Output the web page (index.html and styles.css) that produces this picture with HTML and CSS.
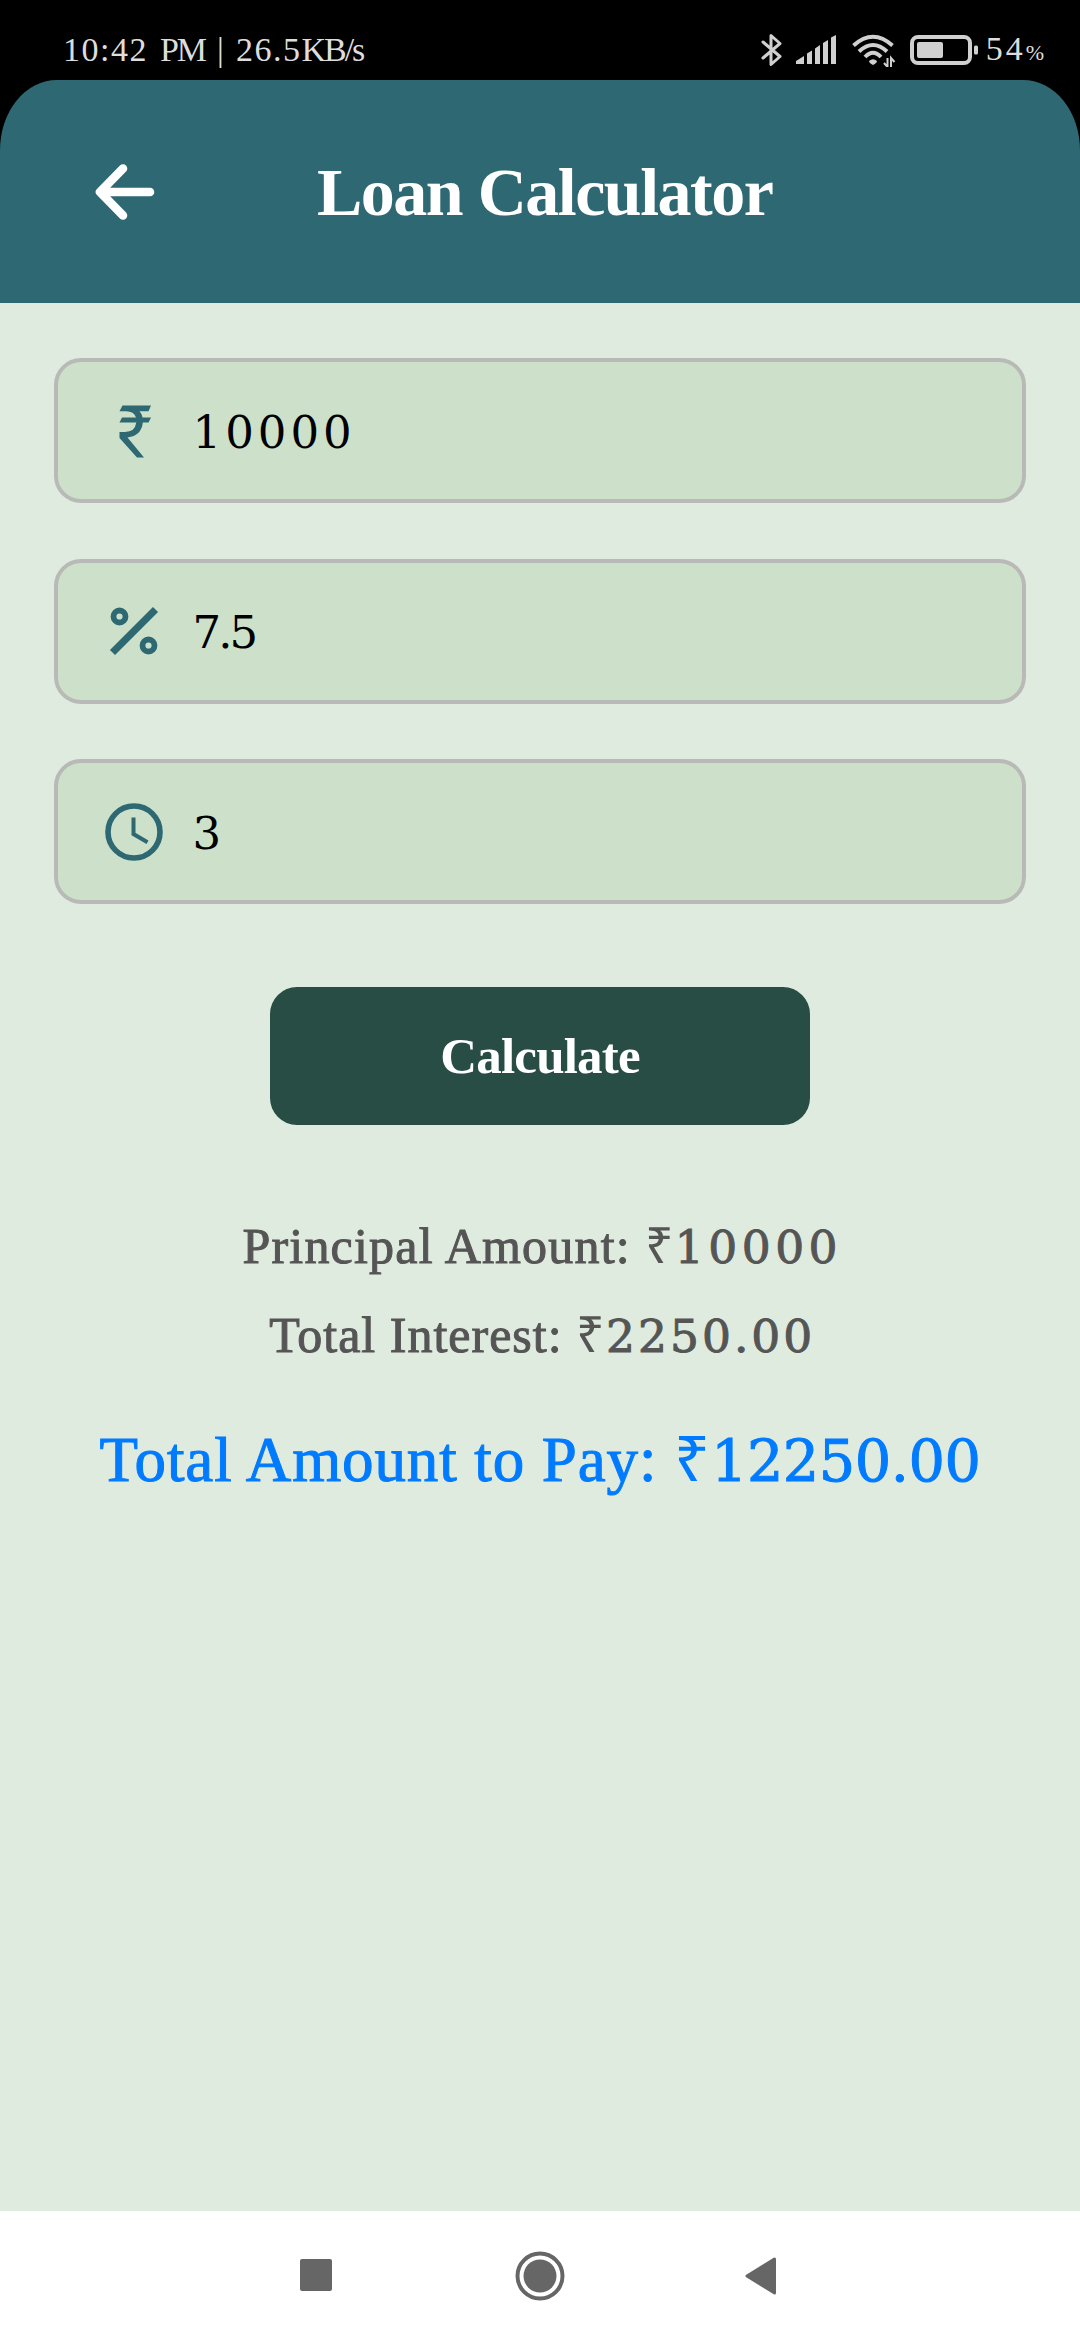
FILE: index.html
```html
<!DOCTYPE html>
<html lang="en">
<head>
<meta charset="utf-8">
<title>Loan Calculator</title>
<link rel="stylesheet" href="styles.css">
</head>
<body>
<div class="status">
  <div class="clock"><span class="digits">10:42</span> <span class="caps">PM</span> | <span class="digits">26.5</span><span class="caps">KB/s</span></div>
  <div class="indicators">
    <svg class="bt" width="22" height="34" viewBox="0 0 22 34"><path d="M2 9 19 23.500 10 31.500V2.500L19 10.500 2 25" fill="none" stroke="#d0d0d0" stroke-width="3" stroke-linecap="round" stroke-linejoin="round"/></svg>
    <svg class="signal" width="40" height="34" viewBox="0 0 40 34"><path d="M0 31V28L8 23V31ZM11 31V20.500L16 17.500V31ZM19 31V15.500L24 12V31ZM27 31V10L32 7V31ZM35 31V4.500L40 2V31Z" fill="#d0d0d0"/></svg>
    <svg class="wifi" width="44" height="34" viewBox="0 0 44 34"><g fill="none" stroke="#d0d0d0" stroke-width="4"><path d="M1.500 12.500Q21 -5 40.500 12.500"/><path d="M7 18.500Q21 5.500 35 18.500"/><path d="M13 24Q21 15.500 29 24"/></g><path d="M17 28Q21 24.500 25 28 25 30 21 32 17 30 17 28Z" fill="#d0d0d0"/><path d="M35.500 25V34L32 30M39 34V25L42.500 29" fill="none" stroke="#d0d0d0" stroke-width="2"/></svg>
    <svg class="battery" width="68" height="34" viewBox="0 0 68 34"><rect x="2" y="4" width="58" height="26" rx="6" fill="none" stroke="#d0d0d0" stroke-width="4"/><rect x="7" y="9" width="26" height="16" rx="2" fill="#d0d0d0"/><rect x="64" y="12.500" width="4" height="9" rx="1.500" fill="#d0d0d0"/></svg>
    <div class="level"><span class="digits">54</span><span class="pct">%</span></div>
  </div>
</div>
<header class="header">
  <svg class="back" width="60" height="56" viewBox="0 0 60 56"><path d="M28 4.500 5 28 28 51.500M5 28H55" fill="none" stroke="#fff" stroke-width="8.600" stroke-linecap="round" stroke-linejoin="round"/></svg>
  <h1 class="title">Loan Calculator</h1>
</header>
<main class="main">
  <div class="fields">
    <div class="field">
      <svg width="58" height="58" viewBox="0 0 58 58" fill="#2d6873"><path d="M17.500 3.500H46L43.500 9.300H34.500Q37 12 37.600 15.500H46L43.500 20.600H37.800Q36.500 34 22.500 35.500L39 55.500H32L14.500 36V30H20Q30 30 31.300 20.600H14.500L17 15.500H31Q29 9.300 21 9.300H14.500Z"/></svg>
      <span class="value wide">10000</span>
    </div>
    <div class="field">
      <svg width="58" height="58" viewBox="0 0 58 58" fill="none" stroke="#2d6873"><path d="M7.500 50.500 50.500 7.500" stroke-width="7.200"/><circle cx="14.500" cy="14.500" r="6" stroke-width="5.800"/><circle cx="43.500" cy="43.500" r="6" stroke-width="5.800"/></svg>
      <span class="value">7.5</span>
    </div>
    <div class="field">
      <svg width="58" height="58" viewBox="0 0 58 58" fill="none" stroke="#2d6873"><circle cx="29" cy="29" r="26" stroke-width="5.600"/><path d="M28.500 14.500V31L42.500 39.300" stroke-width="4"/></svg>
      <span class="value">3</span>
    </div>
  </div>
  <button class="calculate">Calculate</button>
  <section class="results">
    <p class="line">Principal Amount: <span class="rupee">₹</span><span class="sum">10000</span></p>
    <p class="line interest">Total Interest: <span class="rupee">₹</span><span class="sum">2250.00</span></p>
    <p class="line total">Total Amount to Pay: <span class="rupee">₹</span><span class="sum">12250.00</span></p>
  </section>
</main>
<nav class="nav">
  <svg width="32" height="50" viewBox="0 0 32 50"><rect y="8" width="32" height="32" rx="2" fill="#666"/></svg>
  <svg width="50" height="50" viewBox="0 0 50 50"><circle cx="25" cy="25" r="22.500" fill="none" stroke="#666" stroke-width="4"/><circle cx="25" cy="25" r="16.500" fill="#666"/></svg>
  <svg class="nav-back" width="32" height="50" viewBox="0 0 32 50"><path d="M2 25 29.500 8V42Z" fill="#666" stroke="#666" stroke-width="3" stroke-linejoin="round"/></svg>
</nav>
</body>
</html>
```
FILE: styles.css
```css
* { box-sizing: border-box; }
body {
  margin: 0;
  width: 1080px;
  height: 2340px;
  display: flex;
  flex-direction: column;
  background: linear-gradient(#000 0 160px, #e0ebdf 160px);
  font-family: "Liberation Serif", serif;
}
svg { display: block; flex: none; }
.status {
  height: 80px;
  flex: none;
  display: flex;
  justify-content: space-between;
  align-items: center;
  padding: 19px 36px 0 63px;
  color: #ddd;
  font-size: 34px;
  line-height: 40px;
  white-space: nowrap;
}
.clock { word-spacing: 3.500px; }
.clock .digits { letter-spacing: 1.5px; }
.caps { letter-spacing: -2px; }
.indicators { display: flex; align-items: center; }
.signal { margin-left: 13px; }
.wifi { margin-left: 16px; }
.battery { margin-left: 14px; }
.level { margin-left: 8px; padding-top: 2px; }
.level .digits { letter-spacing: 3px; }
.pct { font-size: 22px; }
.header {
  height: 223px;
  flex: none;
  display: flex;
  align-items: center;
  padding-left: 95px;
  background: #2d6873;
  border-radius: 57px 57px 0 0 / 70px 70px 0 0;
}
.title {
  margin: 0 0 0 162px;
  padding-top: 2px;
  font-size: 68px;
  font-weight: 700;
  letter-spacing: -1.500px;
  color: #fff;
}
.main {
  height: 1908px;
  flex: none;
  background: #e0ebdf;
  padding: 55px 54px 0;
  display: flex;
  flex-direction: column;
  align-items: center;
}
.fields { width: 100%; display: grid; gap: 55.500px; }
.field {
  height: 145px;
  display: flex;
  align-items: center;
  gap: 30px;
  padding-left: 46.500px;
  border: 4px solid #b9bab8;
  border-radius: 27px;
  background: #cde0c9;
}
.value {
  padding-top: 3px;
  font-family: "DejaVu Serif", serif;
  font-size: 45px;
  color: #000;
  letter-spacing: -3px;
}
.wide { letter-spacing: 4px; }
.calculate {
  width: 540px;
  height: 138px;
  margin-top: 83px;
  padding: 0;
  border: 0;
  border-radius: 27px;
  background: #274d45;
  color: #fff;
  font: 700 51px "Liberation Serif", serif;
  letter-spacing: -0.800px;
}
.results { margin-top: 76.500px; text-align: center; }
.line {
  margin: 0;
  font-size: 50px;
  line-height: 89px;
  letter-spacing: 1.200px;
  color: #555;
  -webkit-text-stroke: 1px currentColor;
  white-space: nowrap;
}
.rupee { line-height: 0; -webkit-text-stroke: 0; }
.sum {
  font-family: "DejaVu Serif", serif;
  font-size: 0.910em;
  line-height: 0;
  letter-spacing: 4.500px;
  margin-right: -4.500px;
}
.interest { letter-spacing: 1px; }
.interest .sum { letter-spacing: 3px; }
.total {
  margin-top: 36.500px;
  font-size: 63px;
  letter-spacing: 0.900px;
  color: #007bff;
}
.total .sum { letter-spacing: -0.500px; margin-right: 0; }
.nav {
  height: 129px;
  flex: none;
  display: flex;
  justify-content: center;
  align-items: center;
  gap: 183px;
  padding-right: 3px;
  background: #fff;
}
.nav-back { margin-left: -3px; }
```
